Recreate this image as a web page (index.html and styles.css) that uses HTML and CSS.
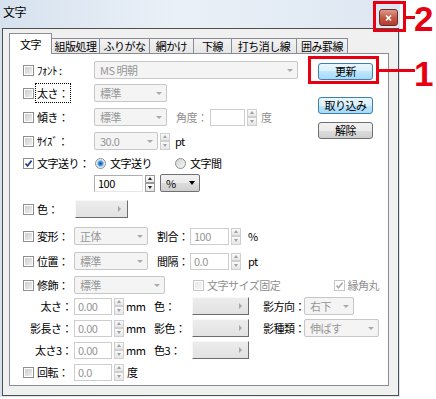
FILE: index.html
```html
<!DOCTYPE html>
<html lang="ja">
    <head>
        <meta charset="UTF-8" />
        <meta name="viewport" content="width=device-width, initial-scale=1.0" />
        <title>文字</title>
        <link rel="stylesheet" href="styles.css">
    </head>
    <body>
        <div class="window">
            <div class="titlebar">
                <span class="title">文字</span>
                <span class="close">
                    <svg width="7" height="6" viewBox="0 0 7 6"><path d="M1 0.5 L6 5.5 M6 0.5 L1 5.5" stroke="#fff" stroke-width="1.6"/></svg>
                </span>
            </div>

            <div class="client">
                <div class="tabs">
                    <div class="tab active t1">文字</div>
                    <div class="tab t2">組版処理</div>
                    <div class="tab t3">ふりがな</div>
                    <div class="tab t4">網かけ</div>
                    <div class="tab t5">下線</div>
                    <div class="tab t6">打ち消し線</div>
                    <div class="tab t7">囲み罫線</div>
                </div>

                <div class="panel">
                    <div class="side">
                        <div class="btn hot first">更新</div>
                        <div class="btn hot">取り込み</div>
                        <div class="btn">解除</div>
                    </div>

                    <!-- 上段 -->
                    <div class="row top">
                        <span class="check"></span>
                        <span class="label wide">ﾌｫﾝﾄ :</span>
                        <span class="select w-font">MS 明朝<i class="arrow"></i></span>
                    </div>
                    <div class="row top">
                        <span class="check"></span>
                        <span class="label wide"><span class="focus">太さ：</span></span>
                        <span class="select w-73">標準<i class="arrow"></i></span>
                    </div>
                    <div class="row top">
                        <span class="check"></span>
                        <span class="label wide">傾き：</span>
                        <span class="select w-73">標準<i class="arrow"></i></span>
                        <span class="label gray angle">角度：</span>
                        <span class="input w-35"></span>
                        <span class="spin"><span><i class="up"></i></span><span><i class="down"></i></span></span>
                        <span class="unit gray">度</span>
                    </div>
                    <div class="row top">
                        <span class="check"></span>
                        <span class="label wide">ｻｲｽﾞ：</span>
                        <span class="select w-64">30.0<i class="arrow"></i></span>
                        <span class="spin"><span><i class="up"></i></span><span><i class="down"></i></span></span>
                        <span class="unit pt">pt</span>
                    </div>

                    <div class="row">
                        <span class="check on"><svg width="9" height="9" viewBox="0 0 9 9"><path d="M1.5 4.5 L3.5 6.8 L7.6 1.6" stroke="#22438a" stroke-width="1.7" fill="none"/></svg></span>
                        <span class="label wide">文字送り：</span>
                        <span class="option first-opt"><span class="radio on"></span>文字送り</span>
                        <span class="option"><span class="radio"></span>文字間</span>
                    </div>
                    <div class="row">
                        <span class="input on w-49 indent">100</span>
                        <span class="spin on"><span><i class="up"></i></span><span><i class="down"></i></span></span>
                        <span class="select on w-40">%<i class="arrow"></i></span>
                    </div>

                    <!-- 中段 -->
                    <div class="row">
                        <span class="check"></span>
                        <span class="label">色：</span>
                        <span class="color w-53"><i class="tri"></i></span>
                    </div>
                    <div class="row">
                        <span class="check"></span>
                        <span class="label">変形：</span>
                        <span class="select w-74">正体<i class="arrow"></i></span>
                        <span class="label mid">割合：</span>
                        <span class="input w-39">100</span>
                        <span class="spin"><span><i class="up"></i></span><span><i class="down"></i></span></span>
                        <span class="unit pct">%</span>
                    </div>
                    <div class="row">
                        <span class="check"></span>
                        <span class="label">位置：</span>
                        <span class="select w-74">標準<i class="arrow"></i></span>
                        <span class="label mid">間隔：</span>
                        <span class="input w-39">0.0</span>
                        <span class="spin"><span><i class="up"></i></span><span><i class="down"></i></span></span>
                        <span class="unit pct">pt</span>
                    </div>
                    <div class="row">
                        <span class="check"></span>
                        <span class="label">修飾：</span>
                        <span class="select w-91">標準<i class="arrow"></i></span>
                        <span class="check off fixed"></span>
                        <span class="gray w-fixed">文字サイズ固定</span>
                        <span class="check off on"><svg width="9" height="9" viewBox="0 0 9 9"><path d="M1.5 4.5 L3.5 6.8 L7.6 1.6" stroke="#a6a6a6" stroke-width="1.5" fill="none"/></svg></span>
                        <span class="gray">縁角丸</span>
                    </div>

                    <!-- 下段 -->
                    <div class="row">
                        <span class="sub">太さ：</span>
                        <span class="input w-38">0.00</span>
                        <span class="spin"><span><i class="up"></i></span><span><i class="down"></i></span></span>
                        <span class="mm">mm</span>
                        <span class="clr">色：</span>
                        <span class="color w-57"><i class="tri"></i></span>
                        <span class="shadow">影方向：</span>
                        <span class="select w-50">右下<i class="arrow"></i></span>
                    </div>
                    <div class="row">
                        <span class="sub">影長さ：</span>
                        <span class="input w-38">0.00</span>
                        <span class="spin"><span><i class="up"></i></span><span><i class="down"></i></span></span>
                        <span class="mm">mm</span>
                        <span class="clr">影色：</span>
                        <span class="color w-57"><i class="tri"></i></span>
                        <span class="shadow">影種類：</span>
                        <span class="select w-75">伸ばす<i class="arrow"></i></span>
                    </div>
                    <div class="row">
                        <span class="sub">太さ3：</span>
                        <span class="input w-38">0.00</span>
                        <span class="spin"><span><i class="up"></i></span><span><i class="down"></i></span></span>
                        <span class="mm">mm</span>
                        <span class="clr">色3：</span>
                        <span class="color w-57"><i class="tri"></i></span>
                    </div>
                    <div class="row">
                        <span class="check"></span>
                        <span class="label">回転：</span>
                        <span class="input w-38">0.0</span>
                        <span class="spin"><span><i class="up"></i></span><span><i class="down"></i></span></span>
                        <span class="unit deg">度</span>
                    </div>
                </div>
            </div>
        </div>

        <div class="mark box-close"></div>
        <div class="mark line-close"></div>
        <div class="num num-2">2</div>

        <div class="mark box-update"></div>
        <div class="mark line-update"></div>
        <div class="num num-1">1</div>
    </body>
</html>
```

FILE: styles.css
```css
* {
    margin: 0;
    padding: 0;
    box-sizing: border-box;
}

body {
    width: 436px;
    height: 399px;
    position: relative;
    overflow: hidden;
    background: #fff;
    font: 11px/1 "Noto Sans CJK JP", sans-serif;
    letter-spacing: -0.5px;
    color: #000;
}

.window {
    width: 400px;
    height: 397px;
    background: linear-gradient(to right, #d7e2ef, #eaf0f7 45%, #dde7f2);
}

.titlebar {
    height: 28px;
    display: flex;
    align-items: flex-start;
    justify-content: space-between;
    padding: 6px 2px 0 3px;
}

.title {
    font-size: 12px;
}

.close {
    width: 19px;
    height: 17px;
    margin-top: 3px;
    border: 1px solid #6e2a22;
    border-radius: 3px;
    background: linear-gradient(#dc9a8c, #c65a48 50%, #b43c2c);
    display: flex;
    align-items: center;
    justify-content: center;
}

.client {
    margin-left: 2px;
    width: 397px;
    height: 368px;
    border: 1px solid #4f4f4f;
    background: #f0f0f0;
    padding: 4px 0 0 6px;
}

/* タブ */
.tabs {
    display: flex;
    align-items: flex-end;
    height: 20px;
}

.tab {
    height: 15px;
    border: 1px solid #898c95;
    border-left: none;
    border-bottom: none;
    background: linear-gradient(#f3f3f3, #e6e6e6);
    display: flex;
    align-items: center;
    justify-content: center;
    padding-top: 1px;
}

.tab.active {
    height: 21px;
    margin-bottom: -1px;
    border-left: 1px solid #898c95;
    background: #fff;
    position: relative;
    z-index: 1;
    padding-top: 0;
}

.t1 { width: 43px; }
.t2 { width: 48px; }
.t3 { width: 50px; }
.t4 { width: 44px; }
.t5 { width: 38px; }
.t6 { width: 65px; }
.t7 { width: 51px; }

.panel {
    width: 380px;
    height: 333px;
    border: 1px solid #898c95;
    background: #fff;
    padding: 6px 0 0 13px;
    display: grid;
    grid-template-columns: 295px 61px;
    grid-template-rows: 23px 24px 24px 22px 20px 26px 27px 25px 24px 21px 22px 22px 22px 20px;
    align-items: start;
}

.side {
    grid-column: 2;
    grid-row: 1 / 5;
    display: flex;
    flex-direction: column;
    gap: 8px;
    padding-top: 3px;
}

.btn {
    width: 55px;
    height: 17px;
    border: 1px solid #707070;
    border-radius: 3px;
    background: linear-gradient(#f2f2f2, #ebebeb 50%, #dddddd 50%, #cfcfcf);
    display: flex;
    align-items: center;
    justify-content: center;
}

.btn.hot {
    border-color: #3c7fb1;
    background: linear-gradient(#eaf6fd, #d9f0fc 50%, #bee6fd 50%, #a7d9f5);
}

.btn.first {
    margin-bottom: 9px;
}

.row {
    grid-column: 1 / -1;
    height: 20px;
    display: flex;
    align-items: center;
    white-space: nowrap;
}

.row.top {
    grid-column: 1;
}

/* チェックボックス・ラジオ */
.check {
    flex: none;
    width: 11px;
    height: 11px;
    margin-right: 3px;
    border: 1px solid #8e8f8f;
    background: linear-gradient(135deg, #c9c9c9, #f4f4f4);
    box-shadow: inset 0 0 0 1px #fff;
    display: flex;
    align-items: center;
    justify-content: center;
}

.check.on {
    background: #fff;
}

.check.off {
    border-color: #c6c6c6;
    background: linear-gradient(135deg, #e6e6e6, #f8f8f8);
}

.check.off.on {
    background: #fff;
    margin-left: 28px;
}

.check.fixed {
    margin-left: 28px;
}

.radio {
    flex: none;
    width: 11px;
    height: 11px;
    border-radius: 50%;
    border: 1px solid #8e8f8f;
    background: linear-gradient(135deg, #d2d2d2, #f6f6f6);
    margin-right: 4px;
}

.radio.on {
    background: radial-gradient(circle, #174f96 0, #3d8fd8 2px, #9cc8ef 3px, #e8eef5 4px);
}

.option {
    display: flex;
    align-items: center;
    width: 80px;
}

.first-opt {
    margin-left: 1px;
}

/* ラベル */
.label {
    flex: none;
    width: 37px;
}

.label.wide {
    width: 57px;
}

.focus {
    outline: 1px dotted #000;
    outline-offset: 1px;
}

.label.angle {
    width: 34px;
    margin-left: 9px;
}

.label.mid {
    width: 33px;
    margin-left: 9px;
}

.gray {
    color: #8f8f8f;
}

.w-fixed {
    width: 99px;
}

.sub {
    flex: none;
    width: 49px;
    text-align: right;
    margin-right: 2px;
}

.mm {
    flex: none;
    width: 30px;
    padding-left: 2px;
}

.clr {
    flex: none;
    width: 37px;
}

.shadow {
    flex: none;
    width: 41px;
    margin-left: 14px;
}

.unit {
    margin-left: 4px;
}

.unit.pt {
    margin-left: 5px;
}

.unit.pct {
    margin-left: 7px;
}

.unit.deg {
    margin-left: 3px;
}

/* コンボボックス */
.select {
    flex: none;
    height: 18px;
    border: 1px solid #c7c7c7;
    border-radius: 2px;
    background: #f4f4f4;
    color: #979797;
    display: flex;
    align-items: center;
    padding: 0 4px 0 5px;
}

.select.on {
    border-color: #707070;
    background: linear-gradient(#f2f2f2, #ebebeb 50%, #dddddd 50%, #cfcfcf);
    color: #000;
    margin-left: 5px;
}

.arrow {
    margin-left: auto;
    border-left: 3px solid transparent;
    border-right: 3px solid transparent;
    border-top: 3px solid #a9a9a9;
}

.select.on .arrow {
    border-left-width: 3.5px;
    border-right-width: 3.5px;
    border-top: 4px solid #000;
}

.w-font { width: 204px; }
.w-73 { width: 73px; }
.w-64 { width: 64px; }
.w-74 { width: 74px; }
.w-91 { width: 91px; }
.w-40 { width: 40px; }
.w-50 { width: 50px; }
.w-75 { width: 75px; }

/* テキストボックス */
.input {
    flex: none;
    height: 17px;
    border: 1px solid #cdcdcd;
    background: #fff;
    color: #959595;
    display: flex;
    align-items: center;
    padding-left: 3px;
}

.input.on {
    border-color: #abadb3 #e3e9ef #e3e9ef #abadb3;
    color: #000;
}

.indent {
    margin-left: 71px;
}

.w-35 { width: 35px; }
.w-38 { width: 38px; }
.w-39 { width: 39px; }
.w-49 { width: 49px; }

.spin {
    flex: none;
    width: 10px;
    height: 17px;
    margin-left: 2px;
    display: flex;
    flex-direction: column;
}

.spin > span {
    flex: 1;
    border: 1px solid #cfcfcf;
    background: linear-gradient(#fafafa, #e6e6e6);
    display: flex;
    align-items: center;
    justify-content: center;
}

.spin.on > span {
    border-color: #9a9a9a;
}

.up {
    border-left: 2.5px solid transparent;
    border-right: 2.5px solid transparent;
    border-bottom: 3px solid #a0a0a0;
}

.down {
    border-left: 2.5px solid transparent;
    border-right: 2.5px solid transparent;
    border-top: 3px solid #a0a0a0;
}

.spin.on .up {
    border-bottom-color: #222;
}

.spin.on .down {
    border-top-color: #222;
}

/* 色ボタン */
.color {
    flex: none;
    height: 18px;
    border: 1px solid;
    border-color: #f8f8f8 #6c6c6c #6c6c6c #f8f8f8;
    background: linear-gradient(#ececec, #e2e2e2);
    display: flex;
    align-items: center;
    justify-content: flex-end;
    padding-right: 6px;
    margin-left: 1px;
}

.w-53 { width: 53px; }
.w-57 { width: 57px; }

.tri {
    border-top: 3px solid transparent;
    border-bottom: 3px solid transparent;
    border-left: 3px solid #a6a6a6;
}

/* 注釈 */
.mark {
    position: absolute;
    background: #e60012;
}

.box-close,
.box-update {
    background: none;
    border: 3px solid #e60012;
}

.box-close {
    left: 373px;
    top: 1px;
    width: 33px;
    height: 31px;
}

.line-close {
    left: 406px;
    top: 16px;
    width: 9px;
    height: 3px;
}

.box-update {
    left: 308px;
    top: 56px;
    width: 71px;
    height: 28px;
}

.line-update {
    left: 379px;
    top: 69px;
    width: 36px;
    height: 3px;
}

.num {
    position: absolute;
    font: bold 35px/1 "Liberation Sans", sans-serif;
    letter-spacing: 0;
    color: #e60012;
}

.num-2 {
    left: 414px;
    top: 1px;
}

.num-1 {
    left: 414px;
    top: 56px;
}
```
